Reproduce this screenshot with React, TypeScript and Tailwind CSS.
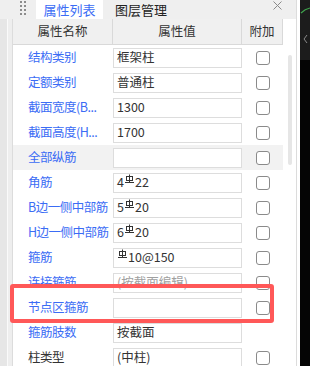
import React from "react";

const FONT = '"Noto Sans CJK SC", "Noto Sans", sans-serif';

function Rebar() {
  return (
    <svg width="9" height="12" viewBox="0 0 9 12" className="inline-block align-top mt-[1px] mx-[1px]">
      <line x1="4.5" y1="0.5" x2="4.5" y2="8" stroke="#333" strokeWidth="1" />
      <rect x="1.5" y="2.5" width="6" height="4" fill="none" stroke="#333" strokeWidth="1" />
      <line x1="0" y1="8.5" x2="9" y2="8.5" stroke="#333" strokeWidth="1" />
    </svg>
  );
}

type Row = {
  name: string;
  value?: React.ReactNode;
  black?: boolean;
  hover?: boolean;
  check?: boolean;
  gray?: boolean;
};

const rows: Row[] = [
  { name: "结构类别", value: "框架柱", check: true },
  { name: "定额类别", value: "普通柱", check: true },
  { name: "截面宽度(B...", value: "1300", check: true },
  { name: "截面高度(H...", value: "1700", check: true },
  { name: "全部纵筋", value: "", check: true, hover: true },
  { name: "角筋", value: <>4<Rebar />22</>, check: true },
  { name: "B边一侧中部筋", value: <>5<Rebar />20</>, check: true },
  { name: "H边一侧中部筋", value: <>6<Rebar />20</>, check: true },
  { name: "箍筋", value: <><Rebar />10@150</>, check: true },
  { name: "连接箍筋", value: "(按截面编辑)", check: true, gray: true },
  { name: "节点区箍筋", value: "", check: true },
  { name: "箍筋肢数", value: "按截面", check: false },
  { name: "柱类型", value: "(中柱)", check: true, black: true },
];

export default function App() {
  return (
    <div
      className="relative w-[310px] h-[366px] overflow-hidden bg-white flex text-[12.5px] text-[#333]"
      style={{ fontFamily: FONT }}
    >
      {/* panel */}
      <div className="w-[296px] flex flex-col">
        {/* tab bar */}
        <div className="h-[19px] bg-[#efefef] flex items-stretch shrink-0">
          <div className="pl-[20px] pt-[1px] grid grid-cols-2 gap-x-[1px] gap-y-[2px] content-start w-[26px]">
            {Array.from({ length: 8 }).map((_, i) => (
              <div key={i} className="w-[2px] h-[2px] bg-[#8c8c8c]" />
            ))}
          </div>
          <div className="ml-[10px] w-[67px] bg-white flex items-center justify-center text-[13px] text-[#3b6cf5] leading-none">
            属性列表
          </div>
          <div className="ml-[12px] flex items-center leading-none text-[13px] text-[#222]">图层管理</div>
          <div className="flex-1" />
          <div className="w-[18px] mr-[10px] flex items-start justify-center pt-[1px]">
            <svg width="9" height="9" viewBox="0 0 9 9">
              <path d="M0.5 0.5 L8.5 8.5 M8.5 0.5 L0.5 8.5" stroke="#8a8a8a" strokeWidth="1" />
            </svg>
          </div>
        </div>

        {/* body */}
        <div className="flex flex-1">
          {/* left strip */}
          <div className="w-[13px] flex shrink-0">
            <div className="w-[7px] bg-[#e6e6e6]" />
            <div className="w-[1px] bg-[#fafafa]" />
            <div className="w-[4px] bg-[#eeeeee]" />
            <div className="w-[1px] bg-[#dcdcdc]" />
          </div>

          {/* table */}
          <div className="w-[270px] flex flex-col shrink-0">
            <div className="h-[26px] bg-[#f0f0f0] border-b border-[#d9d9d9] flex shrink-0 text-[#333]">
              <div className="w-[100px] border-r border-[#d9d9d9] flex items-center justify-center">属性名称</div>
              <div className="w-[129px] border-r border-[#d9d9d9] flex items-center justify-center">属性值</div>
              <div className="w-[41px] border-r border-[#d9d9d9] flex items-center justify-center">附加</div>
            </div>
            {rows.map((r, i) => (
              <div key={i} className={`h-[25px] flex items-center shrink-0 ${r.hover ? "bg-[#f2f2f2]" : "bg-white"}`}>
                <div
                  className={`w-[100px] shrink-0 pl-[15px] whitespace-nowrap tracking-[-0.5px] ${r.black ? "text-[#333]" : "text-[#3b6cf5]"}`}
                >
                  {r.name}
                </div>
                <div className="w-[129px] shrink-0 h-[20px] border border-[#dddddd] bg-white flex items-center px-[3px] whitespace-nowrap overflow-hidden">
                  <span className={r.gray ? "text-[#a0a0a0]" : "text-[#333]"}>{r.value}</span>
                </div>
                <div className="w-[41px] shrink-0 flex items-center justify-center">
                  {r.check && (
                    <div className="w-[14px] h-[14px] border border-[#8a8a8a] rounded-[3px] bg-white ml-[1px]" />
                  )}
                </div>
              </div>
            ))}
          </div>

          {/* scrollbar */}
          <div className="w-[13px] shrink-0 bg-white pl-[5px] pt-[36px]">
            <div className="w-[4px] h-[110px] rounded-full bg-[#e6e6e6]" />
          </div>
        </div>
      </div>

      {/* panel border + gap */}
      <div className="w-[4px] border-l border-[#dcdcdc] bg-white shrink-0" />

      {/* canvas */}
      <div className="w-[10px] bg-[#050505] shrink-0 flex flex-col">
        <div className="h-[60px] bg-[#1c1c1c]">
          <svg width="10" height="60" viewBox="0 0 10 60">
            <path d="M1 13 Q5 9 10 8" stroke="#3fa34d" strokeWidth="1.2" fill="none" />
            <path d="M7 35 L4 39 L7 43" stroke="#8a8a8a" strokeWidth="1" fill="none" />
          </svg>
        </div>
      </div>

      {/* red highlight */}
      <div className="absolute left-[10px] top-[284px] w-[264px] h-[39px] border-4 border-[#ff5858] rounded-[3px] pointer-events-none" />
    </div>
  );
}
